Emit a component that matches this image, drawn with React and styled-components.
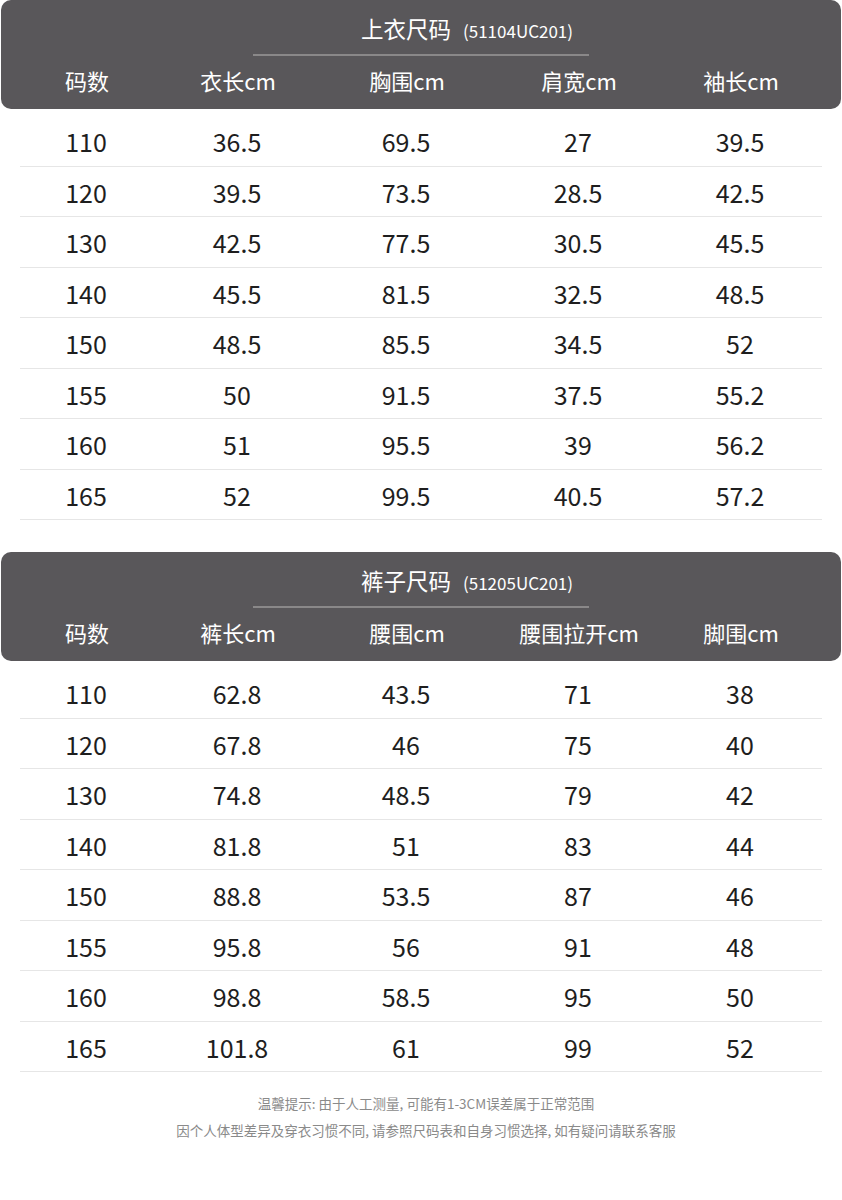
import React from "react";
import styled, { createGlobalStyle } from "styled-components";

const GlobalStyle = createGlobalStyle`
	body {
		margin: 0;
		background: #ffffff;
		font-family: "Noto Sans CJK SC", "Noto Sans", sans-serif;
	}
`;

const tops = {
	title: "上衣尺码",
	code: "(51104UC201)",
	columns: ["码数", "衣长cm", "胸围cm", "肩宽cm", "袖长cm"],
	rows: [
		["110", "36.5", "69.5", "27", "39.5"],
		["120", "39.5", "73.5", "28.5", "42.5"],
		["130", "42.5", "77.5", "30.5", "45.5"],
		["140", "45.5", "81.5", "32.5", "48.5"],
		["150", "48.5", "85.5", "34.5", "52"],
		["155", "50", "91.5", "37.5", "55.2"],
		["160", "51", "95.5", "39", "56.2"],
		["165", "52", "99.5", "40.5", "57.2"]
	]
};

const pants = {
	title: "裤子尺码",
	code: "(51205UC201)",
	columns: ["码数", "裤长cm", "腰围cm", "腰围拉开cm", "脚围cm"],
	rows: [
		["110", "62.8", "43.5", "71", "38"],
		["120", "67.8", "46", "75", "40"],
		["130", "74.8", "48.5", "79", "42"],
		["140", "81.8", "51", "83", "44"],
		["150", "88.8", "53.5", "87", "46"],
		["155", "95.8", "56", "91", "48"],
		["160", "98.8", "58.5", "95", "50"],
		["165", "101.8", "61", "99", "52"]
	]
};

function SizeTable({ data }) {
	return (
		<Section>
			<Header>
				<Title>
					{data.title}
					<Code>{data.code}</Code>
				</Title>
				<Divider />
				<Grid>
					{data.columns.map(col => <HeadCell key={col}>{col}</HeadCell>)}
				</Grid>
			</Header>
			<Body>
				{data.rows.map(row => (
					<Row key={row[0]}>
						{row.map((cell, i) => <Cell key={i}>{cell}</Cell>)}
					</Row>
				))}
			</Body>
		</Section>
	);
}

export default function App() {
	return (
		<Page>
			<GlobalStyle />
			<SizeTable data={tops} />
			<SizeTable data={pants} />
			<Notes>
				<p>温馨提示: 由于人工测量, 可能有1-3CM误差属于正常范围</p>
				<p>因个人体型差异及穿衣习惯不同, 请参照尺码表和自身习惯选择, 如有疑问请联系客服</p>
			</Notes>
		</Page>
	);
}

const columns = "132px 170px 168px 176px 148px";

const Page = styled.div`
	width: 842px;
	display: flex;
	flex-direction: column;
	gap: 32px;
`;

const Section = styled.div`
	display: flex;
	flex-direction: column;
`;

const Header = styled.div`
	margin: 0 1px;
	height: 109px;
	box-sizing: border-box;
	background: #59575a;
	border-radius: 10px;
	padding: 13px 19px 0;
	display: flex;
	flex-direction: column;
	align-items: center;
	color: #ffffff;
`;

const Title = styled.div`
	font-size: 22.5px;
	line-height: 30px;
	margin-left: 92px;
	display: flex;
	align-items: baseline;
	gap: 12px;
`;

const Code = styled.span`
	font-size: 17px;
`;

const Divider = styled.div`
	width: 336px;
	height: 2px;
	background: #8a8889;
	margin-top: 8px;
`;

const Grid = styled.div`
	display: grid;
	grid-template-columns: ${columns};
	width: 800px;
	margin-top: 10px;
	text-align: center;
`;

const HeadCell = styled.div`
	font-size: 22px;
	line-height: 28px;
	white-space: nowrap;
`;

const Body = styled.div`
	margin: 7px 20px 0;
	display: flex;
	flex-direction: column;
`;

const Row = styled.div`
	display: grid;
	grid-template-columns: ${columns};
	height: 50.5px;
	box-sizing: border-box;
	border-bottom: 1px solid #e6e6e6;
	align-items: center;
	text-align: center;
`;

const Cell = styled.div`
	font-size: 25px;
	line-height: 30px;
	padding-top: 1px;
	color: #1e1e1e;
`;

const Notes = styled.div`
	margin-top: -14px;
	text-align: center;
	color: #8a8a8a;
	font-size: 13.5px;
	line-height: 27px;
	padding-left: 10px;

	p {
		margin: 0;
	}
`;
